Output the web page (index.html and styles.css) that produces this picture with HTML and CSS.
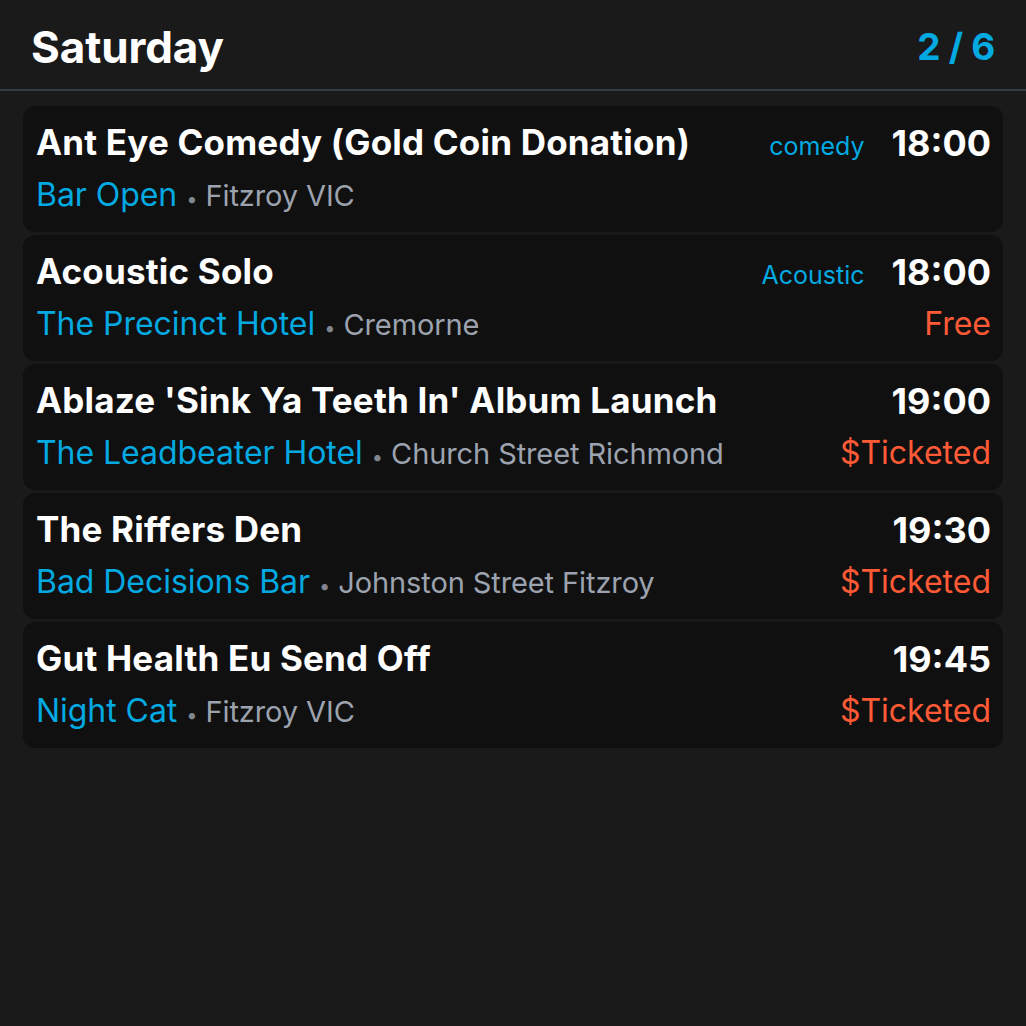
FILE: index.html
```html
<!DOCTYPE html>
<html>
<head>
<meta charset="utf-8">
<link rel="stylesheet" href="styles.css">
</head>
<body>
<div class="app">
  <header class="header">
    <h1 class="day">Saturday</h1>
    <div class="pager">2 / 6</div>
  </header>
  <ul class="list">
    <li class="card">
      <div class="row top">
        <span class="title">Ant Eye Comedy (Gold Coin Donation)</span>
        <span class="right"><span class="tag">comedy</span><span class="time">18:00</span></span>
      </div>
      <div class="row bottom">
        <span class="place"><span class="venue">Bar Open</span><span class="dot">•</span><span class="loc">Fitzroy VIC</span></span>
      </div>
    </li>
    <li class="card">
      <div class="row top">
        <span class="title">Acoustic Solo</span>
        <span class="right"><span class="tag">Acoustic</span><span class="time">18:00</span></span>
      </div>
      <div class="row bottom">
        <span class="place"><span class="venue">The Precinct Hotel</span><span class="dot">•</span><span class="loc">Cremorne</span></span>
        <span class="price">Free</span>
      </div>
    </li>
    <li class="card">
      <div class="row top">
        <span class="title">Ablaze 'Sink Ya Teeth In' Album Launch</span>
        <span class="right"><span class="time">19:00</span></span>
      </div>
      <div class="row bottom">
        <span class="place"><span class="venue">The Leadbeater Hotel</span><span class="dot">•</span><span class="loc">Church Street Richmond</span></span>
        <span class="price">$Ticketed</span>
      </div>
    </li>
    <li class="card">
      <div class="row top">
        <span class="title">The Riffers Den</span>
        <span class="right"><span class="time">19:30</span></span>
      </div>
      <div class="row bottom">
        <span class="place"><span class="venue">Bad Decisions Bar</span><span class="dot">•</span><span class="loc">Johnston Street Fitzroy</span></span>
        <span class="price">$Ticketed</span>
      </div>
    </li>
    <li class="card">
      <div class="row top">
        <span class="title">Gut Health Eu Send Off</span>
        <span class="right"><span class="time">19:45</span></span>
      </div>
      <div class="row bottom">
        <span class="place"><span class="venue">Night Cat</span><span class="dot">•</span><span class="loc">Fitzroy VIC</span></span>
        <span class="price">$Ticketed</span>
      </div>
    </li>
  </ul>
</div>
</body>
</html>
```
FILE: styles.css
```css
* { box-sizing: border-box; }
html, body {
  margin: 0;
  padding: 0;
  background: #1a1a1a;
  height: 100%;
}
body {
  font-family: Inter, "Noto Sans", sans-serif;
  color: #ffffff;
}
.app {
  display: flex;
  flex-direction: column;
}
.header {
  display: flex;
  justify-content: space-between;
  align-items: center;
  height: 91px;
  padding: 4px 31px 0 31px;
  border-bottom: 2px solid #353c47;
}
.day {
  margin: 0;
  font-size: 44px;
  font-weight: 700;
  letter-spacing: -0.1px;
}
.pager {
  font-size: 37px;
  font-weight: 700;
  color: #03a9e1;
  letter-spacing: -0.3px;
}
.list {
  list-style: none;
  margin: 0;
  padding: 15px 23px 0 23px;
  display: flex;
  flex-direction: column;
  gap: 3px;
}
.card {
  background: #101010;
  border-radius: 12px;
  height: 126px;
  padding: 14px 12px 0 13px;
  display: flex;
  flex-direction: column;
  gap: 11px;
}
.row {
  display: flex;
  justify-content: space-between;
  align-items: baseline;
}
.top {
  line-height: 44px;
  height: 44px;
}
.bottom {
  line-height: 40px;
  height: 40px;
}
.title {
  font-size: 35px;
  font-weight: 700;
  letter-spacing: 0.2px;
}
.right {
  display: flex;
  align-items: baseline;
  gap: 27px;
}
.tag {
  font-size: 25px;
  line-height: 30px;
  color: #03a9e1;
}
.time {
  font-size: 36px;
  font-weight: 700;
  position: relative;
  top: 1px;
}
.place {
  display: flex;
  align-items: baseline;
}
.venue {
  font-size: 32px;
  color: #03a9e1;
  letter-spacing: -0.05px;
}
.dot {
  font-size: 20px;
  line-height: 20px;
  color: #80858e;
  margin: 0 8px 0 9px;
}
.loc {
  font-size: 29px;
  color: #9ca3af;
  letter-spacing: -0.1px;
}
.price {
  font-size: 32px;
  color: #ff5a36;
}
```
